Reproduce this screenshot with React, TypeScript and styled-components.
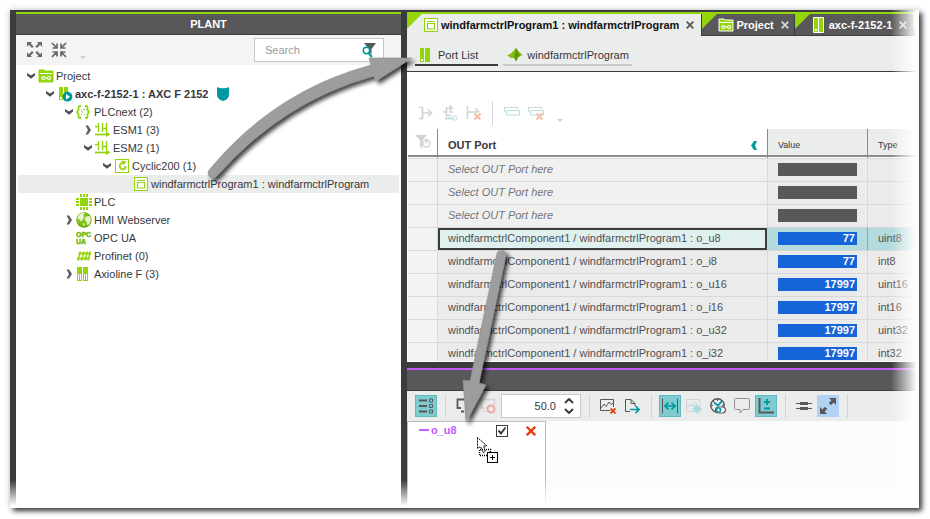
import React from 'react';
import styled, { createGlobalStyle, css } from 'styled-components';

const C = {
  dark: '#3c3c3f',
  header: '#58585a',
  green: '#94d40b',
  teal: '#0098a1',
  panel: '#ebedec',
  line: '#d6d8d9',
  purple: '#c55bff',
  red: '#e8400c',
  blue: '#1565d8',
  text: '#37373a',
};

const GlobalStyle = createGlobalStyle`
  *, *::before, *::after { box-sizing: border-box; }
  body {
    margin: 0;
    background: #fff;
    color: ${C.text};
    font: 11px/18px "Liberation Sans", Arial, sans-serif;
  }
  button, input { font: inherit; color: inherit; }
  button { background: none; border: 0; padding: 0; }
`;

const Page = styled.div`
  position: relative;
  display: flex;
  height: 100vh;
  min-height: 400px;
  padding: 10px 11px 11px 10px;
  overflow: hidden;
`;

const Frame = styled.div`
  position: relative;
  flex: 1;
  display: grid;
  grid-template-columns: 385px minmax(0, 1fr);
  min-width: 0;
  border-top: 2px solid ${C.dark};
  border-left: 6px solid ${C.dark};
  box-shadow: 3px 3px 5px rgba(0, 0, 0, 0.75), 0 0 8px rgba(0, 0, 0, 0.16);
  background: #fff;
`;

const FadeRight = styled.div`
  position: absolute;
  top: -2px;
  right: 0;
  bottom: 0;
  width: 28px;
  background: linear-gradient(to right, transparent, #fff 92%);
  pointer-events: none;
`;

const FadeBottom = styled.div`
  position: absolute;
  left: -6px;
  right: 0;
  bottom: 0;
  height: 28px;
  background: linear-gradient(to bottom, transparent, #fff 92%);
  pointer-events: none;
`;

const Overlay = styled.svg`
  position: absolute;
  top: 0;
  left: 0;
  pointer-events: none;
`;

const Svg = styled.svg`
  display: block;
  flex: none;
`;

/* Plant panel */

const Plant = styled.aside`
  display: flex;
  flex-direction: column;
  min-height: 0;
  border-top: 2px solid ${C.green};
`;

const PlantHeader = styled.h2`
  margin: 0;
  height: 21px;
  border-bottom: 1px solid ${C.dark};
  background: ${C.header};
  color: #fff;
  font-size: 11px;
  line-height: 20px;
  text-align: center;
`;

const PlantToolbar = styled.div`
  display: flex;
  align-items: center;
  gap: 8px;
  height: 30px;
  padding: 0 17px 0 11px;
  background: #f4f4f5;
`;

const PlainButton = styled.button`
  display: flex;
  flex: none;
  align-items: center;
  justify-content: center;
`;

const SearchBox = styled.label`
  display: flex;
  align-items: center;
  width: 130px;
  height: 24px;
  margin-left: auto;
  padding: 0 7px 0 10px;
  border: 1px solid #c4c8cc;
  background: #fff;
`;

const SearchInput = styled.input`
  flex: 1;
  min-width: 0;
  height: 20px;
  padding: 0;
  border: 0;
  outline: 0;
  background: none;
  &::placeholder { color: #999b9d; opacity: 1; }
`;

const Tree = styled.ul`
  margin: 0;
  padding: 2px;
  list-style: none;
`;

const TreeRow = styled.li<{ $level: number; $selected?: boolean }>`
  display: grid;
  grid-template-columns: 13px 17px auto 20px;
  justify-content: start;
  column-gap: 1px;
  align-items: center;
  height: 18px;
  padding-left: ${p => 6 + p.$level * 19}px;
  background: ${p => (p.$selected ? C.panel : 'none')};
`;

const TreeLabel = styled.span<{ $bold?: boolean }>`
  font-weight: ${p => (p.$bold ? 700 : 400)};
  white-space: nowrap;
`;

/* Editor area */

const Editor = styled.main`
  display: flex;
  flex-direction: column;
  min-width: 0;
  min-height: 0;
  border-left: 6px solid ${C.dark};
`;

const TabBar = styled.div`
  display: flex;
  flex: none;
  height: 24px;
  overflow: hidden;
  border-top: 2px solid ${C.green};
  background: ${C.panel};
`;

const Tab = styled.div<{ $active?: boolean }>`
  display: flex;
  flex: none;
  align-items: center;
  gap: 2px;
  padding: 0 5px 0 16px;
  font-weight: 700;
  white-space: nowrap;
  background: linear-gradient(135deg, ${C.green} 10px, transparent 11px);
  ${p =>
    p.$active
      ? css`
          color: #111;
          padding-right: 7px;
        `
      : css`
          color: #fff;
          background-color: ${C.header};
          border-bottom: 1px solid ${C.dark};
        `}
  & + & { border-left: 1px solid ${C.dark}; }
`;

const CloseButton = styled(PlainButton)`
  margin-left: 5px;
`;

const SubTabs = styled.nav`
  display: flex;
  flex: none;
  gap: 5px;
  height: 36px;
  padding: 2px 8px 5px;
  border-bottom: 1px solid ${C.dark};
  background: ${C.panel};
`;

const SubTab = styled.button<{ $active?: boolean }>`
  display: flex;
  align-items: center;
  gap: 4px;
  padding: 8px 3px 0 4px;
  height: 28px;
  white-space: nowrap;
  border-bottom: 2px solid ${p => (p.$active ? C.dark : '#c6c9cd')};
  ${p => p.$active && css`padding-right: 20px;`}
`;

const PortToolbar = styled.div`
  display: flex;
  flex: none;
  align-items: center;
  gap: 8px;
  height: 57px;
  padding: 25px 10px 0 11px;
`;

const Divider = styled.span<{ $tight?: boolean }>`
  flex: none;
  width: 1px;
  height: 24px;
  margin: ${p => (p.$tight ? '0 5px 0 6px' : '0 3px 0 2px')};
  background: #d2d4d5;
`;

const TableArea = styled.div`
  flex: 1;
  min-height: 0;
  padding-left: 1px;
  overflow: hidden;
  border-bottom: 1px solid #fff;
`;

const PortTable = styled.table`
  width: 100%;
  table-layout: fixed;
  border-collapse: separate;
  border-spacing: 0;
`;

const Th = styled.th<{ $width?: number; $grey?: boolean }>`
  height: 29px;
  padding: 3px 10px 0;
  ${p => p.$width && css`width: ${p.$width}px;`}
  border-right: 1px solid #8a8c8c;
  background: ${p => (p.$grey ? C.panel : '#fff')};
  box-shadow: inset 0 -1px #fff, inset 0 -3px #8a8c8c;
  font-size: ${p => (p.$grey ? 9 : 11)}px;
  font-weight: ${p => (p.$grey ? 400 : 700)};
  text-align: left;
  &:first-child { padding: 0 7px 3px; }
`;

const ThContent = styled.div`
  display: flex;
  align-items: center;
  justify-content: space-between;
`;

const Td = styled.td<{ $tone?: 'gutter' | 'empty' }>`
  height: 23px;
  padding: 0 10px 2px;
  border-top: 1px solid ${C.line};
  border-right: 1px solid ${C.line};
  background: ${p => (p.$tone === 'gutter' ? '#f3f3f3' : p.$tone === 'empty' ? '#f0f0f0' : '#ebebeb')};
  color: #505053;
  line-height: 20px;
  white-space: nowrap;
`;

const Row = styled.tr<{ $selected?: boolean }>`
  ${p =>
    p.$selected &&
    css`
      ${Td} + ${Td} {
        background: #b3dadc;
        border-right-color: #5fb9bd;
      }
      ${Td}:nth-child(2) {
        background: #dff0ef;
        box-shadow: inset 0 0 0 2px ${C.dark};
        border-right-color: #b3dadc;
      }
    `}
`;

const Placeholder = styled.em`
  color: #747577;
`;

const ValueBar = styled.div<{ $filled?: boolean }>`
  height: 13px;
  padding-right: 2px;
  background: ${p => (p.$filled ? C.blue : C.header)};
  color: #fff;
  font-weight: 700;
  line-height: 13px;
  text-align: right;
`;

/* Logic analyzer */

const Analyzer = styled.section`
  flex: none;
  border-top: 6px solid ${C.dark};
`;

const AnalyzerHeader = styled.div`
  height: 23px;
  border-top: 2px solid ${C.purple};
  border-bottom: 1px solid ${C.dark};
  background: ${C.header};
`;

const AnalyzerToolbar = styled.div`
  display: flex;
  align-items: center;
  gap: 2px;
  height: 30px;
  padding-left: 8px;
  background: ${C.panel};
`;

const ToolButton = styled.button<{ $tone?: 'teal' | 'blue' }>`
  display: flex;
  flex: none;
  align-items: center;
  justify-content: center;
  width: 22px;
  height: 22px;
  ${p => p.$tone === 'teal' && css`background: #7fcbcf; border: 1px solid #5fb9bd;`}
  ${p => p.$tone === 'blue' && css`background: #b1d2f3;`}
`;

const Spinner = styled.div`
  display: flex;
  flex: none;
  width: 80px;
  height: 24px;
  align-items: center;
  border: 1px solid #c6c9cb;
  background: #fff;
`;

const SpinnerInput = styled.input`
  flex: 1;
  min-width: 0;
  padding: 0;
  border: 0;
  outline: 0;
  background: none;
  text-align: right;
`;

const SpinnerButtons = styled.div`
  display: flex;
  flex-direction: column;
  gap: 4px;
  padding: 0 6px 0 8px;
`;

const ChartArea = styled.div`
  display: flex;
  height: 87px;
  background: #fcfcfd;
`;

const Legend = styled.div`
  width: 139px;
  border: 1px solid #b9bbbc;
  border-bottom: 0;
  background: #fff;
`;

const LegendRow = styled.div`
  display: flex;
  align-items: center;
  height: 18px;
  padding: 0 8px 0 11px;
`;

const LegendName = styled.label`
  display: flex;
  align-items: center;
  gap: 2px;
  width: 77px;
  padding-bottom: 2px;
  color: ${C.purple};
  font-weight: 700;
  line-height: 16px;
  &::before {
    content: '';
    width: 10px;
    height: 2px;
    background: ${C.purple};
  }
`;

const TickBox = styled.input`
  appearance: none;
  width: 12px;
  height: 12px;
  margin: 0 18px 0 0;
  border: 1px solid ${C.dark};
  background: #fff;
  &:checked {
    background: url("data:image/svg+xml,%3Csvg xmlns='http://www.w3.org/2000/svg' viewBox='0 0 10 10'%3E%3Cpath d='M1.5 4.5l2.5 3 4.5-6' fill='none' stroke='%233c3c3f' stroke-width='2'/%3E%3C/svg%3E") center / 10px 10px no-repeat;
  }
`;

/* Icons */

type IconProps = { w?: number; h?: number; children: React.ReactNode };
const Icon = ({ w = 16, h = 16, children }: IconProps) => (
  <Svg width={w} height={h} viewBox={`0 0 ${w} ${h}`} fill="none" aria-hidden="true">
    {children}
  </Svg>
);

const ChevronDown = () => (
  <Icon w={10} h={8}>
    <path d="M1 1L5 3.4 9 1V3.6L5 6.8 1 3.6z" fill="#4d4d4f" />
  </Icon>
);
const ChevronRight = () => (
  <Icon w={10} h={10}>
    <path d="M2.500 0.500H5L8 5 5 9.500H2.500L5 5z" fill="#5d5d5f" />
  </Icon>
);

const ExpandIcon = () => (
  <Icon>
    <g fill="#68686a">
      <path d="M0 0h5L3.6 1.4 6.6 4.4 5 6 1.8 2.8 0 5z" />
      <path d="M15 0h-5l1.4 1.4-3 3L10 6l3.2-3.2L15 5z" />
      <path d="M0 15h5l-1.4-1.4 3-3L5 9 1.8 12.2 0 10z" />
      <path d="M15 15h-5l1.4-1.4-3-3L10 9l3.2 3.2L15 10z" />
    </g>
  </Icon>
);
const CollapseIcon = () => (
  <Icon>
    <path
      d="M1 1l4.6 4.6M15 1l-4.6 4.6M1 15l4.6-4.6M15 15l-4.6-4.6M1.5 6H6V1.5M14.5 6H10V1.5M1.5 10H6V14.5M14.5 10H10V14.5"
      stroke="#68686a"
      strokeWidth="1.7"
    />
  </Icon>
);
const MoreIcon = () => (
  <Icon w={16} h={18}>
    <path d="M5 15h6l-3 3z" fill="#cfd1d3" />
  </Icon>
);
const SearchFilterIcon = () => (
  <Icon w={14} h={15}>
    <path d="M2 0h12L9.500 6v5L7 9V6z" fill="#58585a" />
    <circle cx="4.500" cy="7.500" r="3.200" stroke={C.teal} strokeWidth="1.600" fill="#fff" />
    <path d="M6.500 10l3.500 4" stroke={C.teal} strokeWidth="2" />
  </Icon>
);

const ProjectIcon = ({ framed }: { framed?: boolean }) => (
  <Icon w={16} h={14}>
    <path d="M1 1h5l1 1h8v11H1z" fill={C.green} stroke={framed ? '#fff' : C.green} />
    <path d="M2 4.500h12" stroke="#fff" />
    <circle cx="5.500" cy="9" r="1.500" stroke="#fff" strokeWidth="1.200" />
    <circle cx="11" cy="9" r="1.500" stroke="#fff" strokeWidth="1.200" />
    <path d="M7 9h2.500" stroke="#fff" />
  </Icon>
);
const ControllerIcon = () => (
  <Icon w={16} h={16}>
    <path d="M2 1h4v13H2zM7 1h4v13H7z" fill={C.green} />
    <path d="M3 11h2v2H3z" fill="#fff" />
    <circle cx="10.500" cy="10.700" r="4.900" fill={C.teal} />
    <path d="M9 8l4 2.700L9 13.500z" fill="#fff" />
  </Icon>
);
const ModuleIcon = ({ framed }: { framed?: boolean }) => (
  <Icon w={framed ? 16 : 15} h={16}>
    {framed ? (
      <path d="M2.500.500h10v15h-10zM7.500.500v15" fill={C.green} stroke="#fff" />
    ) : (
      <path d="M1 1h4v14H1zM6 1h5v14H6z" fill={C.green} />
    )}
    <path d={framed ? 'M4 12h2v2H4z' : 'M2 12h2v2H2z'} fill="#fff" />
  </Icon>
);
const PlcnextIcon = () => (
  <Icon w={16} h={14}>
    <path d="M5 1H4Q2.500 1 2.500 3v2L1 7l1.500 2v2q0 2 1.500 2h1M9 1h1q1.500 0 1.500 2v2L13 7l-1.500 2v2q0 2-1.500 2H9" stroke={C.green} strokeWidth="1.800" />
    <path d="M5 5h1M7 4.500h2M5 7h2M5 9.500h1M8 9.500h1" stroke={C.green} />
  </Icon>
);
const EsmIcon = () => (
  <Icon w={16} h={14}>
    <path d="M3.500 0v9M7.500 0v9M11.500 0v9M0 3.500h3.500M7.500 5.500h4" stroke={C.green} strokeWidth="1.400" />
    <path d="M0 11.500h12" stroke={C.green} strokeWidth="1.800" />
    <path d="M11 8.500l4.500 3-4.500 2.500z" fill={C.green} />
  </Icon>
);
const CyclicIcon = () => (
  <Icon w={16} h={16}>
    <rect x="1.500" y="1.500" width="13" height="13" stroke={C.green} />
    <path d="M10.500 11A3.300 3.300 0 1 1 8 4.900" stroke={C.green} strokeWidth="1.800" />
    <path d="M11.300 8v1.500l-1 2" stroke={C.green} strokeWidth="1.800" />
    <path d="M7.500 2.500l5 1-3.500 4z" fill={C.green} />
  </Icon>
);
const ProgramIcon = () => (
  <Icon w={16} h={16}>
    <rect x="1.500" y="1.500" width="13" height="13" fill="#fff" stroke={C.green} />
    <path d="M4 4.500h8M4.500 6.500h7v5.500h-7z" stroke={C.green} strokeWidth="1.200" />
  </Icon>
);
const ChipIcon = () => (
  <Icon w={16} h={16}>
    <path d="M4 4h8v8H4z" fill={C.green} />
    <path d="M5 0v3M8 0v3M11 0v3M5 13v3M8 13v3M11 13v3M0 5h3M0 8h3M0 11h3M13 5h3M13 8h3M13 11h3" stroke={C.green} strokeWidth="2" />
  </Icon>
);
const GlobeIcon = () => (
  <Icon w={16} h={16}>
    <circle cx="8" cy="8" r="7.700" fill="#69ab12" />
    <circle cx="7.500" cy="7.500" r="6.500" fill="#84c21b" />
    <path d="M2 4Q5 0 9 1L7 3.500 8.500 5 6.500 8 5 9.500 3.500 7.500 1.500 7zM10 4.500l4-.5 1 4-2 4.500-2 .5-.5-3.500L8.500 8zM7 11l2 1-1.500 2.500z" fill="#e5f4cd" />
  </Icon>
);
const IconText = styled.text`
  font: 700 7px "Liberation Sans", Arial, sans-serif;
  fill: #76bb0b;
  stroke: #76bb0b;
  stroke-width: 0.5px;
`;
const OpcIcon = () => (
  <Icon w={16} h={14}>
    <IconText x="0" y="6">OPC</IconText>
    <IconText x="0" y="13">UA</IconText>
  </Icon>
);
const ProfinetIcon = () => (
  <Icon w={16} h={12}>
    <path d="M4.500 1.500L2 10.500M8 1.500L5.500 10.500M11.500 1.500L9 10.500M14.500 1.500l-2.500 9" stroke={C.green} strokeWidth="1.500" />
    <path d="M2.500 3.500H15M1 8.500h12.500" stroke={C.green} strokeWidth="2" />
  </Icon>
);
const AxiolineIcon = () => (
  <Icon w={16} h={14}>
    <path d="M1 0h5v14H1zM7 0h5v14H7z" fill={C.green} />
    <path d="M2.500 7v6M4.500 7v6M8.500 7v6M10.500 7v6" stroke="#fff" />
  </Icon>
);
const ShieldIcon = () => (
  <Icon w={20} h={14}>
    <path d="M7 0q2.500 1.500 6 1.300Q16.500 1.500 19 0v8q0 4-6 6Q7 12 7 8z" fill={C.teal} />
  </Icon>
);
const MatlabIcon = () => (
  <Icon w={16} h={14}>
    <path d="M0 7l4-1.500L9 0l2 3 4.500 4-4 2-2.500 4.500L7 10 4 10z" fill="#86be12" />
    <path d="M9 0l2 3 2 5-2 1-2 4.500L7 9z" fill="#5f9b0a" />
  </Icon>
);
const Cross = ({ color, size = 8 }: { color: string; size?: number }) => (
  <Icon w={size} h={size}>
    <path d={`M.700.700L${size - 0.7} ${size - 0.7}M${size - 0.7}.700L.700 ${size - 0.7}`} stroke={color} strokeWidth={size > 8 ? 2.4 : 1.8} />
  </Icon>
);

const OFF = '#d0d2d4';
const ConnectIcon = () => (
  <Icon>
    <path d="M1 2.500h3.500v11H1M4.500 8H14M10 4.500L13.500 8l-3.500 3.500" stroke={OFF} strokeWidth="1.700" />
  </Icon>
);
const ReconnectIcon = () => (
  <Icon>
    <path d="M10 3H4.500v7.500H9M1 7h3.500M7.500.500L10 3 7.500 5.500M7 7h4" stroke={OFF} strokeWidth="1.700" />
    <path d="M3 13.500h8" stroke="#b5dde0" strokeWidth="1.800" />
    <circle cx="13" cy="13" r="2.200" stroke="#b5dde0" />
  </Icon>
);
const DisconnectIcon = () => (
  <Icon>
    <path d="M1.500 1v13M2 7h10M9.500 3.500L13 7" stroke={OFF} strokeWidth="1.500" />
    <path d="M8.500 8.500l6 6M14.500 8.500l-6 6" stroke="#f5bfae" strokeWidth="2.200" />
  </Icon>
);
const WatchIcon = ({ remove }: { remove?: boolean }) => (
  <Icon>
    <path d="M.500 7V2.500h13V4" stroke={OFF} strokeWidth="1.200" />
    <path d="M2.500 5.500h13V10h-13z" stroke="#b5dde0" />
    {remove && <path d="M8.500 8.500l6 6M14.500 8.500l-6 6" stroke="#f5bfae" strokeWidth="2.200" />}
  </Icon>
);
const FilterOffIcon = () => (
  <Icon>
    <path d="M0 1h12L7.500 6.500V15L5 12V6.500z" fill={OFF} />
    <circle cx="11.500" cy="9.500" r="3.500" fill="#fff" stroke={OFF} strokeWidth="1.300" />
    <path d="M11.500 5v4.500" stroke={OFF} strokeWidth="1.500" />
  </Icon>
);

const INK = '#58585a';
const ListIcon = () => (
  <Icon>
    <path d="M1 2.500h8M1 8h8M1 13.500h8" stroke={INK} strokeWidth="2" />
    <path d="M11.500 1h3v3h-3zM11.500 6.500h3v3h-3zM11.500 12h3v3h-3z" stroke={INK} />
  </Icon>
);
const RecordIcon = () => (
  <Icon>
    <path d="M5 10H1.500V1.500h12V8M5 13.500h3" stroke={INK} strokeWidth="1.800" />
    <path d="M9 8l5 3.500L9 15z" fill={C.teal} />
  </Icon>
);
const StopRecordIcon = () => (
  <Icon>
    <path d="M5 10H1.500V1.500h13V7M3 13.500h3" stroke="#d3d4d5" strokeWidth="1.600" />
    <circle cx="11" cy="11" r="3.500" stroke="#eda9a9" strokeWidth="2.200" />
  </Icon>
);
const ClearChartIcon = () => (
  <Icon>
    <path d="M10 12.500H.500v-11h13V9" stroke={INK} />
    <path d="M1 10l3-4 2 2.500L9 4l2 2.500L13 5" stroke={INK} />
    <path d="M10.500 10.500l5 5M15.500 10.500l-5 5" stroke={C.red} strokeWidth="1.800" />
  </Icon>
);
const ExportIcon = () => (
  <Icon>
    <path d="M6 13.500H1.500v-12H7l4 4V8M7 1.500V5.500h4" stroke={INK} />
    <path d="M6 11.500h9M11.500 8l3.500 3.500L11.500 15" stroke={C.teal} strokeWidth="1.700" />
  </Icon>
);
const FitIcon = () => (
  <Icon>
    <path d="M.500.500v15M15.500.500v15" stroke={INK} />
    <path d="M4 8h8M6.500 4.500L3 8l3.500 3.500M9.500 4.500L13 8l-3.500 3.500" stroke={C.teal} strokeWidth="1.700" />
  </Icon>
);
const FreezeIcon = () => (
  <Icon>
    <path d="M6 13.500H.500v-12h13V5" stroke={OFF} />
    <path d="M1 10l3-4 2 2.500L9 4" stroke={OFF} />
    <path d="M11 6v10M6 11h10M7.500 7.500l7 7M14.500 7.500l-7 7" stroke="#a9dadd" strokeWidth="1.500" />
    <circle cx="11" cy="11" r="2.500" stroke="#a9dadd" />
  </Icon>
);
const ClockIcon = () => (
  <Icon>
    <circle cx="7.500" cy="7.500" r="6.700" stroke={INK} strokeWidth="1.400" />
    <path d="M7.500 1v2M1 7.500h2M12 7.500h2M3 3l1.200 1.200" stroke={INK} />
    <path d="M4 4.500l4 3L12 3" stroke={C.teal} strokeWidth="1.800" />
    <rect x="5.500" y="9" width="10" height="6" rx="3" fill="#fff" stroke={INK} strokeWidth="1.200" />
    <circle cx="8.500" cy="12" r="2.800" fill={C.teal} />
    <path d="M8.500 10.500v3M7 12h3" stroke="#fff" />
  </Icon>
);
const CommentIcon = () => (
  <Icon>
    <path d="M1.500.500h13q1 0 1 1v9q0 1-1 1H9l-3 3.500v-3.500H1.500q-1 0-1-1v-9q0-1 1-1z" stroke="#8e9092" />
  </Icon>
);
const AxisIcon = () => (
  <Icon>
    <path d="M1.500 0v14.500H16" stroke={INK} strokeWidth="2" />
    <path d="M6 4h6M9 1v6M6 10.500h6" stroke={C.teal} strokeWidth="1.800" />
  </Icon>
);
const CursorsIcon = () => (
  <Icon>
    <path d="M0 5.500h16M0 10.500h16" stroke={INK} />
    <path d="M4 5.500h8M4 10.500h8" stroke={INK} strokeWidth="3" />
  </Icon>
);
const MaximizeIcon = () => (
  <Icon>
    <path d="M9 0h7v7l-2.400-2.400L11 7.200 8.800 5l2.600-2.600zM0 9l2.400 2.400L5 8.800 7.200 11l-2.600 2.600L7 16H0z" fill={INK} />
  </Icon>
);

/* Content */

type Node = {
  label: string;
  level: number;
  open?: boolean;
  icon: React.ReactNode;
  bold?: boolean;
  selected?: boolean;
};

const nodes: Node[] = [
  { label: 'Project', level: 0, open: true, icon: <ProjectIcon /> },
  { label: 'axc-f-2152-1 : AXC F 2152', level: 1, open: true, icon: <ControllerIcon />, bold: true },
  { label: 'PLCnext (2)', level: 2, open: true, icon: <PlcnextIcon /> },
  { label: 'ESM1 (3)', level: 3, open: false, icon: <EsmIcon /> },
  { label: 'ESM2 (1)', level: 3, open: true, icon: <EsmIcon /> },
  { label: 'Cyclic200 (1)', level: 4, open: true, icon: <CyclicIcon /> },
  { label: 'windfarmctrlProgram1 : windfarmctrlProgram', level: 5, icon: <ProgramIcon />, selected: true },
  { label: 'PLC', level: 2, icon: <ChipIcon /> },
  { label: 'HMI Webserver', level: 2, open: false, icon: <GlobeIcon /> },
  { label: 'OPC UA', level: 2, icon: <OpcIcon /> },
  { label: 'Profinet (0)', level: 2, icon: <ProfinetIcon /> },
  { label: 'Axioline F (3)', level: 2, open: false, icon: <AxiolineIcon /> },
];

type Port = { name?: string; value?: string; type?: string; selected?: boolean };
const prefix = 'windfarmctrlComponent1 / windfarmctrlProgram1 : ';
const ports: Port[] = [
  {},
  {},
  {},
  { name: 'o_u8', value: '77', type: 'uint8', selected: true },
  { name: 'o_i8', value: '77', type: 'int8' },
  { name: 'o_u16', value: '17997', type: 'uint16' },
  { name: 'o_i16', value: '17997', type: 'int16' },
  { name: 'o_u32', value: '17997', type: 'uint32' },
  { name: 'o_i32', value: '17997', type: 'int32' },
];

const DragArrows = () => (
  <Overlay width="930" height="519" viewBox="0 0 930 519" aria-hidden="true">
    <defs>
      <filter id="drop" x="-20%" y="-20%" width="150%" height="150%">
        <feDropShadow dx="3" dy="3" stdDeviation="2" floodColor="#000" floodOpacity="0.75" />
      </filter>
    </defs>
    <g fill="#9d9d9d" stroke="#8e8e8e" strokeWidth="0.500" filter="url(#drop)">
      <path d="M209 170Q274 91 371 65L369 58 412 58 376 81 374 76Q283 101 217 176A5 5 0 0 1 209 170z" />
      <path d="M497 253A4.700 4.700 0 0 1 506 255L479 383 486 385 466 422 463 380 470 381z" />
    </g>
  </Overlay>
);

const DragCursor = () => (
  <Overlay width="930" height="519" viewBox="0 0 930 519" aria-hidden="true">
    <path d="M477.500 437.500v11l3-2 2.500 6 2.500-1-2-5.500h3.500z" fill="#fff" stroke="#000" strokeDasharray="2 1" />
    <path d="M487 455.500h-7.500v-6h11v3" stroke="#000" fill="none" strokeWidth="1.500" strokeDasharray="1 1" />
    <rect x="487.500" y="452.500" width="10" height="10" fill="#fff" stroke="#000" />
    <path d="M490 457.500h5M492.500 455v5" stroke="#000" />
  </Overlay>
);

export default function App() {
  return (
    <Page>
      <GlobalStyle />
      <Frame>
        <Plant>
          <PlantHeader>PLANT</PlantHeader>
          <PlantToolbar>
            <PlainButton aria-label="Expand all"><ExpandIcon /></PlainButton>
            <PlainButton aria-label="Collapse all"><CollapseIcon /></PlainButton>
            <PlainButton aria-label="More options"><MoreIcon /></PlainButton>
            <SearchBox>
              <SearchInput placeholder="Search" aria-label="Search" />
              <SearchFilterIcon />
            </SearchBox>
          </PlantToolbar>
          <Tree role="tree">
            {nodes.map(n => (
              <TreeRow key={n.label} role="treeitem" $level={n.level} $selected={n.selected} aria-selected={!!n.selected}>
                {n.open === undefined ? (
                  <span />
                ) : (
                  <PlainButton aria-label={n.open ? 'Collapse' : 'Expand'}>
                    {n.open ? <ChevronDown /> : <ChevronRight />}
                  </PlainButton>
                )}
                {n.icon}
                <TreeLabel $bold={n.bold}>{n.label}</TreeLabel>
                {n.bold && <ShieldIcon />}
              </TreeRow>
            ))}
          </Tree>
        </Plant>

        <Editor>
          <TabBar>
            <Tab $active>
              <ProgramIcon />
              <span>windfarmctrlProgram1 : windfarmctrlProgram</span>
              <CloseButton aria-label="Close"><Cross color="#58585a" /></CloseButton>
            </Tab>
            <Tab>
              <ProjectIcon framed />
              <span>Project</span>
              <CloseButton aria-label="Close"><Cross color="#d4d4d6" /></CloseButton>
            </Tab>
            <Tab>
              <ModuleIcon framed />
              <span>axc-f-2152-1</span>
              <CloseButton aria-label="Close"><Cross color="#d4d4d6" /></CloseButton>
            </Tab>
            <Tab />
          </TabBar>
          <SubTabs>
            <SubTab $active>
              <ModuleIcon />
              Port List
            </SubTab>
            <SubTab>
              <MatlabIcon />
              windfarmctrlProgram
            </SubTab>
          </SubTabs>
          <PortToolbar>
            <PlainButton aria-label="Connect"><ConnectIcon /></PlainButton>
            <PlainButton aria-label="Reconnect"><ReconnectIcon /></PlainButton>
            <PlainButton aria-label="Disconnect"><DisconnectIcon /></PlainButton>
            <Divider />
            <PlainButton aria-label="Add to watch"><WatchIcon /></PlainButton>
            <PlainButton aria-label="Remove from watch"><WatchIcon remove /></PlainButton>
            <PlainButton aria-label="More options"><MoreIcon /></PlainButton>
          </PortToolbar>
          <TableArea>
            <PortTable>
              <thead>
                <tr>
                  <Th $width={30}><FilterOffIcon /></Th>
                  <Th $width={330}>
                    <ThContent>
                      OUT Port
                      <Icon w={6} h={9}><path d="M6 0H3L0 4.500 3 9h3L4 4.500z" fill={C.teal} /></Icon>
                    </ThContent>
                  </Th>
                  <Th $width={100} $grey>Value</Th>
                  <Th $grey>Type</Th>
                </tr>
              </thead>
              <tbody>
                {ports.map((p, i) => (
                  <Row key={i} $selected={p.selected}>
                    <Td $tone="gutter" />
                    <Td $tone={p.name ? undefined : 'empty'}>
                      {p.name ? prefix + p.name : <Placeholder>Select OUT Port here</Placeholder>}
                    </Td>
                    <Td><ValueBar $filled={!!p.value}>{p.value}</ValueBar></Td>
                    <Td>{p.type}</Td>
                  </Row>
                ))}
              </tbody>
            </PortTable>
          </TableArea>

          <Analyzer>
            <AnalyzerHeader />
            <AnalyzerToolbar>
              <ToolButton $tone="teal" aria-label="Show legend"><ListIcon /></ToolButton>
              <Divider $tight />
              <ToolButton aria-label="Start recording"><RecordIcon /></ToolButton>
              <ToolButton aria-label="Stop recording"><StopRecordIcon /></ToolButton>
              <Spinner>
                <SpinnerInput defaultValue="50.0" aria-label="Time range" />
                <SpinnerButtons>
                  <PlainButton aria-label="Increase"><Icon w={10} h={6}><path d="M1 5l4-4 4 4" stroke={C.dark} strokeWidth="2" /></Icon></PlainButton>
                  <PlainButton aria-label="Decrease"><Icon w={10} h={6}><path d="M1 1l4 4 4-4" stroke={C.dark} strokeWidth="2" /></Icon></PlainButton>
                </SpinnerButtons>
              </Spinner>
              <Divider $tight />
              <ToolButton aria-label="Clear chart"><ClearChartIcon /></ToolButton>
              <ToolButton aria-label="Export"><ExportIcon /></ToolButton>
              <Divider $tight />
              <ToolButton $tone="teal" aria-label="Fit width"><FitIcon /></ToolButton>
              <ToolButton aria-label="Freeze"><FreezeIcon /></ToolButton>
              <ToolButton aria-label="Time mode"><ClockIcon /></ToolButton>
              <ToolButton aria-label="Comment"><CommentIcon /></ToolButton>
              <ToolButton $tone="teal" aria-label="Axis range"><AxisIcon /></ToolButton>
              <Divider $tight />
              <ToolButton aria-label="Cursors"><CursorsIcon /></ToolButton>
              <ToolButton $tone="blue" aria-label="Maximize"><MaximizeIcon /></ToolButton>
              <Divider $tight />
            </AnalyzerToolbar>
            <ChartArea>
              <Legend>
                <LegendRow>
                  <LegendName htmlFor="signal">o_u8</LegendName>
                  <TickBox id="signal" type="checkbox" defaultChecked />
                  <PlainButton aria-label="Remove signal"><Cross color={C.red} size={10} /></PlainButton>
                </LegendRow>
              </Legend>
            </ChartArea>
          </Analyzer>
        </Editor>
        <FadeRight />
        <FadeBottom />
      </Frame>
      <DragArrows />
      <DragCursor />
    </Page>
  );
}
